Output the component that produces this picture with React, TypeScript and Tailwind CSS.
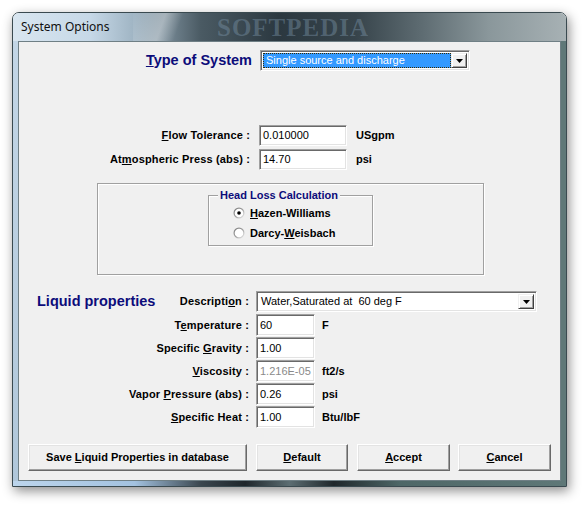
import React from "react";

function DropBtn() {
  return (
    <div className="w-[16px] h-full bg-[#f0f0f0] border border-t-[#f0f0f0] border-l-[#f0f0f0] border-b-[#404040] border-r-[#404040] shadow-[inset_1px_1px_0_#ffffff,inset_-1px_-1px_0_#a0a0a0] flex items-center justify-center">
      <svg width="7" height="4" viewBox="0 0 7 4">
        <path d="M0 0H7L3.5 4Z" fill="#000" />
      </svg>
    </div>
  );
}

function Radio({ checked }: { checked?: boolean }) {
  return (
    <svg width="12" height="12" viewBox="0 0 12 12">
      <defs>
        <linearGradient id={checked ? "rg1" : "rg2"} x1="0" y1="0" x2="1" y2="1">
          <stop offset="0" stopColor="#7a7a7a" />
          <stop offset="0.5" stopColor="#a0a0a0" />
          <stop offset="1" stopColor="#f4f4f4" />
        </linearGradient>
      </defs>
      <circle cx="6" cy="6" r="5.5" fill={checked ? "url(#rg1)" : "url(#rg2)"} />
      <circle cx="6" cy="6" r="4.3" fill="#ffffff" />
      {checked && <circle cx="6" cy="6" r="1.8" fill="#000" />}
    </svg>
  );
}

function Btn({ children, w }: { children: React.ReactNode; w: string }) {
  return (
    <div
      className={`${w} h-[27px] bg-[#f0f0f0] border border-t-[#ffffff] border-l-[#ffffff] border-b-[#696969] border-r-[#696969] shadow-[inset_-1px_-1px_0_#a0a0a0,inset_1px_1px_0_#e3e3e3] flex items-center justify-center text-[11px] font-bold text-black`}
    >
      {children}
    </div>
  );
}

const fieldCls =
  "h-full bg-white border border-t-[#a0a0a0] border-l-[#a0a0a0] border-b-[#ffffff] border-r-[#ffffff] shadow-[inset_1px_1px_0_#696969,inset_-1px_-1px_0_#e3e3e3] flex items-center pl-[3px] text-[11px]";

function PropRow({
  label,
  value,
  unit,
  disabled,
}: {
  label: React.ReactNode;
  value: string;
  unit?: string;
  disabled?: boolean;
}) {
  return (
    <div className="flex items-center h-[22px] mt-[1px]">
      <div className="w-[230px] text-right text-[11px] font-bold text-black tracking-[0.15px]">{label}</div>
      <div className="ml-[7px] w-[59px] h-full">
        <div className={`${fieldCls} ${disabled ? "text-[#8a8a8a]" : "text-black"}`}>{value}</div>
      </div>
      {unit && <div className="ml-[7px] text-[11px] font-bold">{unit}</div>}
    </div>
  );
}

export default function App() {
  return (
    <div className="w-[588px] h-[506px] bg-white overflow-hidden pl-[12px] pt-[12px] font-['Liberation_Sans',Arial,sans-serif] text-black">
      <div className="w-[555px] h-[475px] flex flex-col rounded-t-[7px] overflow-hidden shadow-[2px_4px_12px_rgba(0,0,0,0.45)] border border-[#3a4a50]">
        {/* title bar */}
        <div className="relative h-[28px] bg-[linear-gradient(90deg,#d9e6f0_0%,#c6d8e7_14%,#9fb4c3_22%,#4a5a63_34%,#2b3840_48%,#37444b_62%,#5e6c72_74%,#8a979b_86%,#a7b1b4_100%)] overflow-hidden flex items-center pl-[8px]">
          <div className="absolute left-[120px] top-[-6px] w-[70px] h-[50px] bg-[linear-gradient(110deg,rgba(255,255,255,0)_0%,rgba(255,255,255,0.35)_40%,rgba(255,255,255,0)_60%)]" />
          <div className="absolute left-[204px] top-[2px] text-[25px] leading-[25px] font-bold tracking-[1px] font-['Liberation_Serif',serif] text-[rgba(120,145,165,0.45)]">
            SOFTPEDIA
          </div>
          <span className="relative text-[12px] text-[#101010] font-['Noto_Sans',sans-serif]">System Options</span>
        </div>
        <div className="flex flex-1">
          <div className="w-[5px] bg-[linear-gradient(180deg,#c3d6e6,#b0c7da)]" />
          {/* client */}
          <div className="flex-1 bg-[#f0f0f0] border border-[#6f7f85] flex flex-col">
            {/* Type of system */}
            <div className="flex items-center h-[21px] mt-[8px]">
              <div className="w-[233px] text-right text-[14.5px] font-bold text-[#0c0c7a]">
                <u>T</u>ype of System
              </div>
              <div className="ml-[8px] w-[210px] h-full bg-white border border-t-[#a0a0a0] border-l-[#a0a0a0] border-b-[#ffffff] border-r-[#ffffff] shadow-[inset_1px_1px_0_#696969,inset_-1px_-1px_0_#e3e3e3] flex p-[2px]">
                <div className="flex-1 bg-[#3399ff] border border-dotted border-[#3a2a00] flex items-center pl-[2px] text-[11px] text-white">
                  Single source and discharge
                </div>
                <DropBtn />
              </div>
            </div>

            {/* Flow tolerance */}
            <div className="flex items-center h-[21px] mt-[54px]">
              <div className="w-[231px] text-right text-[11px] font-bold tracking-[0.15px]">
                <u>F</u>low Tolerance :
              </div>
              <div className="ml-[9px] w-[88px] h-full">
                <div className={fieldCls}>0.010000</div>
              </div>
              <div className="ml-[9px] text-[11px] font-bold">USgpm</div>
            </div>
            <div className="flex items-center h-[21px] mt-[3px]">
              <div className="w-[231px] text-right text-[11px] font-bold tracking-[0.15px]">
                At<u>m</u>ospheric Press (abs) :
              </div>
              <div className="ml-[9px] w-[88px] h-full">
                <div className={fieldCls}>14.70</div>
              </div>
              <div className="ml-[9px] text-[11px] font-bold">psi</div>
            </div>

            {/* Group rect */}
            <div className="ml-[78px] mt-[13px] w-[387px] h-[92px] border border-[#a0a0a0] shadow-[1px_1px_0_#ffffff,inset_1px_1px_0_#ffffff] pt-[11px] pl-[110px]">
              <div className="relative w-[165px] h-[51px] border border-[#a0a0a0] shadow-[1px_1px_0_#ffffff,inset_1px_1px_0_#ffffff]">
                <div className="absolute left-[9px] top-[-8px] px-[2px] bg-[#f0f0f0] text-[11px] font-bold text-[#0c0c7a] leading-[14px]">
                  Head Loss Calculation
                </div>
                <div className="flex flex-col pl-[24px] pt-[11px] gap-[8px]">
                  <div className="flex items-center h-[12px]">
                    <Radio checked />
                    <span className="ml-[5px] text-[11px] font-bold">
                      <u>H</u>azen-Williams
                    </span>
                  </div>
                  <div className="flex items-center h-[12px]">
                    <Radio />
                    <span className="ml-[5px] text-[11px] font-bold">
                      Darcy-<u>W</u>eisbach
                    </span>
                  </div>
                </div>
              </div>
            </div>

            {/* Liquid properties */}
            <div className="flex items-center h-[21px] mt-[16px]">
              <div className="w-[230px] flex items-center justify-between pl-[18px]">
                <span className="text-[14.5px] font-bold text-[#0c0c7a]">Liquid properties</span>
                <span className="text-[11px] font-bold tracking-[0.15px]">
                  Descripti<u>o</u>n :
                </span>
              </div>
              <div className="ml-[7px] w-[281px] h-full bg-white border border-t-[#a0a0a0] border-l-[#a0a0a0] border-b-[#ffffff] border-r-[#ffffff] shadow-[inset_1px_1px_0_#696969,inset_-1px_-1px_0_#e3e3e3] flex p-[2px]">
                <div className="flex-1 flex items-center pl-[2px] text-[11px] whitespace-pre">Water,Saturated at  60 deg F</div>
                <DropBtn />
              </div>
            </div>
            <div className="mt-[1px]" />
            <PropRow label={<>T<u>e</u>mperature :</>} value="60" unit="F" />
            <PropRow label={<>Specific <u>G</u>ravity :</>} value="1.00" />
            <PropRow label={<><u>V</u>iscosity :</>} value="1.216E-05" unit="ft2/s" disabled />
            <PropRow label={<>Vapor <u>P</u>ressure (abs) :</>} value="0.26" unit="psi" />
            <PropRow label={<><u>S</u>pecific Heat :</>} value="1.00" unit="Btu/lbF" />

            {/* buttons */}
            <div className="flex items-center mt-[16px] ml-[9px]">
              <Btn w="w-[219px]">
                <span>
                  Save <u>L</u>iquid Properties in database
                </span>
              </Btn>
              <div className="ml-[9px]">
                <Btn w="w-[92px]">
                  <span>
                    <u>D</u>efault
                  </span>
                </Btn>
              </div>
              <div className="ml-[9px]">
                <Btn w="w-[93px]">
                  <span>
                    <u>A</u>ccept
                  </span>
                </Btn>
              </div>
              <div className="ml-[8px]">
                <Btn w="w-[93px]">
                  <span>
                    <u>C</u>ancel
                  </span>
                </Btn>
              </div>
            </div>
          </div>
          <div className="w-[5px] bg-[#5f7878]" />
        </div>
        <div className="h-[5px] bg-[linear-gradient(90deg,#bcd5ec_0%,#a3c2e0_22%,#3a464e_34%,#1e262b_42%,#5c6d72_50%,#1f272b_58%,#4e6767_70%,#5f7878_100%)]" />
      </div>
    </div>
  );
}
